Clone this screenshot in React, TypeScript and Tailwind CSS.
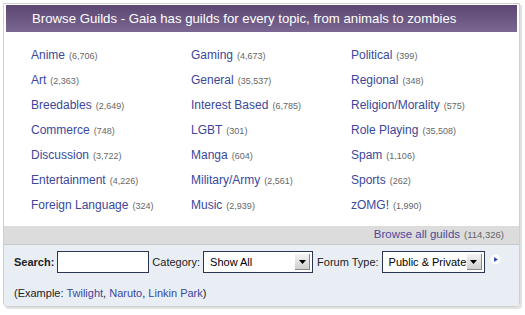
const guilds: [string, string][][] = [
  [
    ["Anime", "6,706"],
    ["Art", "2,363"],
    ["Breedables", "2,649"],
    ["Commerce", "748"],
    ["Discussion", "3,722"],
    ["Entertainment", "4,226"],
    ["Foreign Language", "324"],
  ],
  [
    ["Gaming", "4,673"],
    ["General", "35,537"],
    ["Interest Based", "6,785"],
    ["LGBT", "301"],
    ["Manga", "604"],
    ["Military/Army", "2,561"],
    ["Music", "2,939"],
  ],
  [
    ["Political", "399"],
    ["Regional", "348"],
    ["Religion/Morality", "575"],
    ["Role Playing", "35,508"],
    ["Spam", "1,106"],
    ["Sports", "262"],
    ["zOMG!", "1,990"],
  ],
];

function FakeSelect({ value, width }: { value: string; width: string }) {
  return (
    <div
      className={`flex items-center justify-between h-[22px] ${width} border border-[#2a3550] bg-white pl-[6px] pr-[2px] whitespace-nowrap`}
    >
      <span className="text-[11px] text-black">{value}</span>
      <span className="flex items-center justify-center w-[15px] h-[16px] bg-gradient-to-b from-[#f4f4f4] to-[#cfcfcf] border-r border-b border-[#888]">
        <svg width="7" height="4" viewBox="0 0 7 4">
          <path d="M0 0h7L3.5 4z" fill="#000" />
        </svg>
      </span>
    </div>
  );
}

export default function App() {
  return (
    <div className="w-[525px] h-[315px] bg-white pt-[3px] pl-[3px] font-['Liberation_Sans',Arial,sans-serif]">
      <div className="w-[517px] h-[304px] flex flex-col border border-[#cfcfcf] rounded-b-[4px] shadow-[2px_2px_1px_rgba(0,0,0,0.12)] overflow-hidden">
        <div className="px-[2px] pt-[1px] bg-white">
          <div className="h-[27px] flex items-center pl-[26px] bg-gradient-to-b from-[#5b4771] to-[#7a6792] text-white text-[13.2px] whitespace-nowrap">
            Browse Guilds - Gaia has guilds for every topic, from animals to zombies
          </div>
        </div>
        <div className="flex pl-[27px] pt-[14px] h-[194px] bg-white">
          {guilds.map((col, i) => (
            <div key={i} className="w-[160px] flex flex-col">
              {col.map(([name, count]) => (
                <div key={name} className="h-[25px] flex items-baseline whitespace-nowrap">
                  <a className="text-[12px] text-[#3a489c] cursor-pointer">{name}</a>
                  <span className="ml-[4px] text-[9px] text-[#666]">({count})</span>
                </div>
              ))}
            </div>
          ))}
        </div>
        <div className="h-[19px] flex items-center justify-end pr-[15px] bg-[#dcdcdc] border-b border-[#c8c8c8]">
          <a className="text-[11.5px] text-[#4b4a9a]">Browse all guilds</a>
          <span className="ml-[4px] text-[9.5px] text-[#666]">(114,326)</span>
        </div>
        <div className="flex-1 bg-[#e9eef5] pl-[10px] pt-[6px]">
          <div className="flex items-center text-[11px] text-[#222] whitespace-nowrap">
            <span className="font-bold mr-[3px]">Search:</span>
            <div className="w-[92px] h-[22px] border border-[#2a3550] bg-white" />
            <span className="ml-[3px] mr-[3px]">Category:</span>
            <FakeSelect value="Show All" width="w-[110px]" />
            <span className="ml-[4px] mr-[3px]">Forum Type:</span>
            <FakeSelect value="Public & Private" width="w-[103px]" />
            <svg className="ml-[5px] -mt-[6px]" width="11" height="11" viewBox="0 0 12 12">
              <circle cx="6" cy="6" r="5.5" fill="#fff" />
              <path d="M4.5 3.2L8.6 6 4.5 8.8z" fill="#2b47b5" />
            </svg>
          </div>
          <div className="mt-[12px] text-[11px] text-[#222]">
            (Example: <a className="text-[#3a489c]">Twilight</a>, <a className="text-[#3a489c]">Naruto</a>,{" "}
            <a className="text-[#3a489c]">Linkin Park</a>)
          </div>
        </div>
      </div>
    </div>
  );
}
